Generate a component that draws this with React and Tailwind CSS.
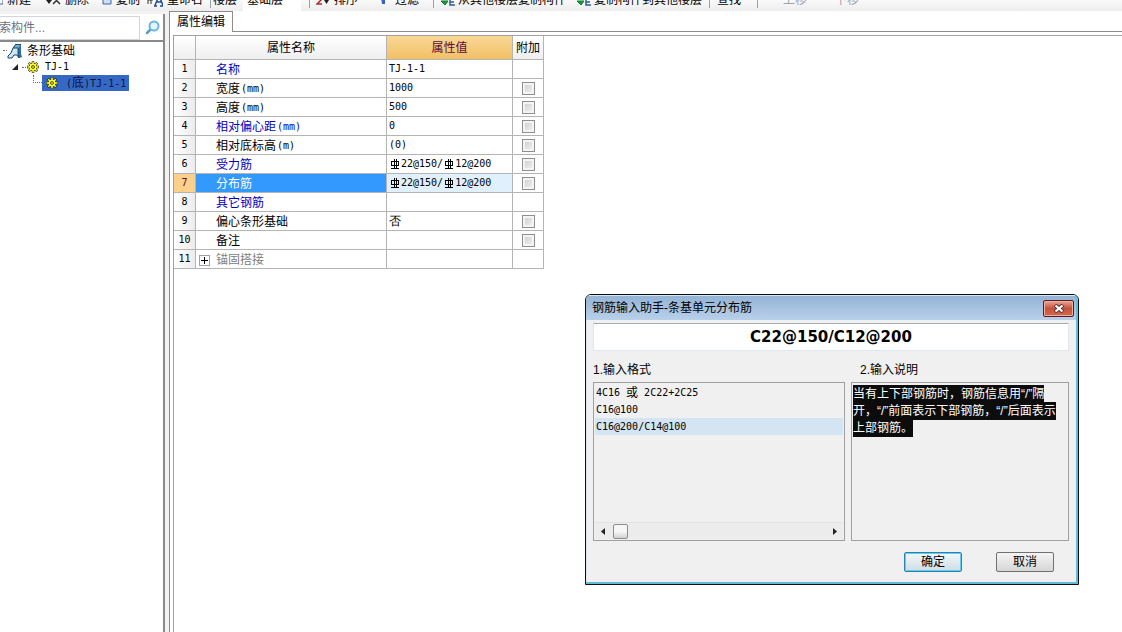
import { useState } from "react";

const TREE_LABEL = "font-['DejaVu_Sans_Mono','Noto_Sans_CJK_SC',monospace] text-[10px]";

const ROWS = [
  { label: "名称", value: "TJ-1-1", tone: "blue" },
  { label: "宽度", unit: "(mm)", value: "1000", check: true },
  { label: "高度", unit: "(mm)", value: "500", check: true },
  { label: "相对偏心距", unit: "(mm)", value: "0", tone: "blue", check: true },
  { label: "相对底标高", unit: "(m)", value: "(0)", check: true },
  { label: "受力筋", rebar: ["22@150/", "12@200"], tone: "blue", check: true },
  { label: "分布筋", rebar: ["22@150/", "12@200"], tone: "blue", check: true },
  { label: "其它钢筋", tone: "blue" },
  { label: "偏心条形基础", cjk: "否", check: true },
  { label: "备注", check: true },
  { label: "锚固搭接", tone: "gray", expandable: true },
];

const FORMATS = [
  { before: "4C16", word: "或", after: "2C22+2C25" },
  { before: "C16@100" },
  { before: "C16@200/C14@100" },
];

function Gear() {
  return (
    <svg className="w-3 h-3 shrink-0" viewBox="0 0 12 12" aria-hidden="true">
      <g stroke="#1c1c00" strokeWidth="2.4">
        <path d="M6 0v12M0 6h12M1.800 1.800l8.400 8.400M10.200 1.800l-8.400 8.400" />
      </g>
      <circle cx="6" cy="6" r="4" fill="#1c1c00" />
      <g stroke="#ffff2e" strokeWidth="1.5">
        <path d="M6 .5v11M.5 6h11M2.2 2.2l7.6 7.6M9.8 2.2l-7.6 7.6" />
      </g>
      <circle cx="6" cy="6" r="3.5" fill="#ffff2e" />
      <circle cx="6" cy="6" r="1.8" fill="#1c1c00" />
      <circle cx="6" cy="6" r=".9" fill="#ffff2e" />
    </svg>
  );
}

function FoundationIcon() {
  return (
    <svg className="w-4 h-4 shrink-0" viewBox="0 0 16 16" aria-hidden="true">
      <path d="M1 15v-2l3-3 2-5 3-4h5v10l1 3-3 1-2-3H7l-2 3z" fill="#cfe6f3" />
      <path d="M9 1h5l-3 4H6z" fill="#6fb0d6" />
      <path d="M14 1v10l1 3-3 1-1-4V5z" fill="#2d6f9f" />
      <path d="M9 1.500h5M9 1L6 5l-2 5-3 3v2h4l2-3h3l2 3M6 5h5v6l1 4" fill="none" stroke="#1c4668" />
    </svg>
  );
}

// grade III bar symbol
function RebarSymbol() {
  return (
    <svg className="w-3 h-3 shrink-0" viewBox="0 0 12 12" role="img" aria-label="三级钢">
      <path d="M2.500 3.500h7v4h-7zM5 1v9M7 1v9M2 10.500h8" fill="none" stroke="#000" shapeRendering="crispEdges" />
    </svg>
  );
}

function ToolButton({ children, disabled }) {
  return (
    <button disabled={disabled} className="shrink-0 whitespace-nowrap leading-4 disabled:text-gray-400">
      {children}
    </button>
  );
}

function CopyFloorIcon() {
  return (
    <svg className="w-[14px] h-4" viewBox="0 0 14 16" aria-hidden="true">
      <path d="M0 9h7l-3 4z" fill="#1c9a3a" stroke="#0f7a2a" />
      <path d="M13 7H9v6h5M9 10h4" fill="none" stroke="#2f5c96" strokeWidth="1.500" />
    </svg>
  );
}

function Toolbar() {
  return (
    <header className="h-[11px] shrink-0 overflow-hidden bg-linear-to-b from-[#fafafa] to-[#ededed] flex items-end">
      <div className="flex items-end pb-[3px] h-5 shrink-0">
        <div className="w-[45px] flex items-end gap-1">
          <svg className="w-[3px] h-4" viewBox="0 0 3 16" aria-hidden="true">
            <path d="M0 12h3V6" fill="none" stroke="#4a66a8" />
          </svg>
          <ToolButton>新建</ToolButton>
        </div>
        <div className="w-[57px] flex items-end gap-1">
          <svg className="w-4 h-4" viewBox="0 0 16 16" aria-hidden="true">
            <path d="M1 8l3 4 3-4z" fill="#222" />
            <path d="M8 5l7 7M15 5l-7 7" stroke="#333" strokeWidth="1.5" />
          </svg>
          <ToolButton>删除</ToolButton>
        </div>
        <div className="w-[45px] flex items-end gap-1">
          <svg className="w-[10px] h-4" viewBox="0 0 10 16" aria-hidden="true">
            <path d="M1 4h8v8H1z" fill="#cfe0f5" stroke="#3864b0" />
          </svg>
          <ToolButton>复制</ToolButton>
        </div>
        <div className="w-[63px] flex items-end gap-1">
          <svg className="w-4 h-4" viewBox="0 0 16 16" aria-hidden="true">
            <path d="M1 4v8M4 4v8M1 8h5" stroke="#333" />
            <path d="M8 13.500l4-10 4 10M9 10h5M7 14h3M13 14h3" fill="none" stroke="#234a9c" strokeWidth="1.500" />
          </svg>
          <ToolButton>重命名</ToolButton>
        </div>
      </div>
      <div className="flex items-end pb-[3px] h-5 shrink-0">
        <span className="w-px h-4 bg-gray-400" />
        <label htmlFor="floor" className="w-[32px] pl-[2px] leading-4">楼层</label>
        <select id="floor" defaultValue="base" className="appearance-none w-[58px] h-5 pb-1 bg-white pl-1 leading-4 -mb-1">
          <option value="base">基础层</option>
        </select>
      </div>
      <div className="flex items-end pb-[3px] h-5 shrink-0 pl-[8px]">
        <span className="w-px h-4 bg-gray-400" />
        <div className="w-[71px] flex items-end gap-1 pl-[6px]">
          <svg className="w-[14px] h-4" viewBox="0 0 14 16" aria-hidden="true">
            <path d="M1 7h5l-5 5h5" fill="none" stroke="#b02a2a" strokeWidth="1.500" />
            <path d="M8 8h5l-2.500 4z" fill="#222" />
          </svg>
          <ToolButton>排序</ToolButton>
        </div>
        <div className="w-[52px] flex items-end gap-[10px]">
          <svg className="w-1 h-4" viewBox="0 0 4 16" aria-hidden="true">
            <path d="M0 5h4v7H1z" fill="#3d5fc4" />
          </svg>
          <ToolButton>过滤</ToolButton>
        </div>
        <span className="w-px h-4 bg-gray-400" />
        <div className="w-[143px] pl-[7px] flex items-end gap-[3px]">
          <CopyFloorIcon />
          <ToolButton>从其他楼层复制构件</ToolButton>
        </div>
        <div className="w-[132px] flex items-end gap-[3px]">
          <CopyFloorIcon />
          <ToolButton>复制构件到其他楼层</ToolButton>
        </div>
        <span className="w-px h-4 bg-gray-400" />
        <div className="w-[47px] pl-[7px]"><ToolButton>查找</ToolButton></div>
        <span className="w-px h-4 bg-gray-400" />
        <div className="w-[77px] pl-[25px]"><ToolButton disabled>上移</ToolButton></div>
        <ToolButton disabled>下移</ToolButton>
      </div>
    </header>
  );
}

function ComponentTree() {
  return (
    <aside className="w-[165px] shrink-0 mt-[3px] border-r-2 border-[#8a8a8a] bg-white overflow-hidden flex flex-col">
      <div className="flex items-center h-[28px] border-b-2 border-[#8a8a8a] pt-px">
        <input
          type="text"
          aria-label="搜索构件"
          placeholder="搜索构件..."
          className="-ml-4 w-[156px] h-[24px] pl-0.5 border border-gray-300 bg-white placeholder:text-gray-500 outline-none"
        />
        <button aria-label="搜索" className="ml-[5px]">
          <svg className="w-[15px] h-[15px]" viewBox="0 0 15 15" fill="none">
            <path d="M5.500 9.500L2 13" stroke="#5b9bd0" strokeWidth="2.500" strokeLinecap="round" />
            <circle cx="9" cy="6" r="4.500" fill="#e4f5fd" stroke="#6cb6e4" strokeWidth="2" />
          </svg>
        </button>
      </div>
      <ul role="tree" className="leading-4">
        <li role="treeitem" aria-expanded="true">
          <div className="flex items-center h-[17px] pl-[3px]">
            <span className="w-1 border-t border-dotted border-gray-500" />
            <FoundationIcon />
            <span className="ml-1">条形基础</span>
          </div>
          <ul role="group">
            <li role="treeitem" aria-expanded="true">
              <div className="flex items-center h-4 pl-3">
                <svg className="w-1.5 h-1.5" viewBox="0 0 6 6" aria-hidden="true">
                  <path d="M6 0v6H0z" fill="#222" />
                </svg>
                <span className="ml-1 w-1 mr-px border-t border-dotted border-gray-500" />
                <Gear />
                <span className={`ml-1.5 ${TREE_LABEL}`}>TJ-1</span>
              </div>
              <ul role="group">
                <li role="treeitem" aria-selected="true" className="flex h-4 pl-[33px]">
                  <span className="w-[9px] h-2 border-l border-b border-dotted border-gray-500" />
                  <div className="flex items-center w-[87px] pl-1 bg-[#3568c4] text-[#0b123c]">
                    <Gear />
                    <span className={`ml-2 ${TREE_LABEL}`}>
                      (<span className="text-xs leading-4">底</span>)TJ-1-1
                    </span>
                  </div>
                </li>
              </ul>
            </li>
          </ul>
        </li>
      </ul>
    </aside>
  );
}

function PropertyRow({ row, index, selected, onSelect }) {
  const tone =
    row.tone === "blue" ? "text-[#0000c0]" : row.tone === "gray" ? "text-[#808080]" : "text-black";
  const mono = "font-['DejaVu_Sans_Mono',monospace] text-[10px]";

  return (
    <tr className="h-[19px]" onClick={onSelect}>
      <th
        scope="row"
        className={`border-r border-b border-[#b4b4b4] font-normal ${mono} ${
          selected ? "bg-[#fbd08a] text-[#5c1030]" : "bg-linear-to-r from-white to-[#ececec]"
        }`}
      >
        {index + 1}
      </th>
      <td className={`border-r border-b border-[#b4b4b4] ${selected ? "bg-[#3399ff] text-white" : tone}`}>
        <div className="flex items-center h-[18px] pt-0.5">
          <span className="w-5 flex pl-[3px]">
            {row.expandable && (
              <button aria-label="展开" className="w-[11px] h-[11px] border border-gray-400 bg-white text-black">
                <svg className="w-[9px] h-[9px]" viewBox="0 0 9 9" aria-hidden="true">
                  <path d="M1 4.500h7M4.500 1v7" stroke="currentColor" />
                </svg>
              </button>
            )}
          </span>
          {row.label}
          {row.unit && <span className={`ml-px ${mono}`}>{row.unit}</span>}
        </div>
      </td>
      <td className={`border-r border-b border-[#b4b4b4] ${selected ? "bg-[#e1f0fd]" : ""}`}>
        <div className={`flex items-center h-[18px] pl-0.5 ${mono}`}>
          {row.value}
          {row.cjk && <span className="text-xs">{row.cjk}</span>}
          {row.rebar &&
            row.rebar.map((part) => (
              <span key={part} className="flex items-center">
                <RebarSymbol />
                {part}
              </span>
            ))}
        </div>
      </td>
      <td className="border-r border-b border-[#b4b4b4]">
        {row.check && (
          <input
            type="checkbox"
            aria-label={`附加 ${row.label}`}
            className="appearance-none block mx-auto w-[13px] h-[13px] border border-[#8e8f8f] bg-linear-to-br from-[#c8cacc] to-[#f6f6f6] shadow-[inset_0_0_0_2px_#f4f4f4] checked:bg-[#3399ff]"
          />
        )}
      </td>
    </tr>
  );
}

function PropertyTable() {
  const [selected, setSelected] = useState(6);
  const head = "border-r border-b border-[#b4b4b4] font-normal";

  return (
    <table className="table-fixed w-[370px] border-separate border-spacing-0">
      <colgroup>
        <col className="w-[22px]" />
        <col className="w-[191px]" />
        <col className="w-[126px]" />
        <col className="w-[31px]" />
      </colgroup>
      <thead>
        <tr className="h-[24px] bg-linear-to-b from-white to-[#eeeeee]">
          <th className={head} aria-label="序号" />
          <th className={head}>属性名称</th>
          <th className={`${head} bg-linear-to-b from-[#f9d796] to-[#f2c062] text-[#5c0a3c]`}>属性值</th>
          <th className={head}>附加</th>
        </tr>
      </thead>
      <tbody>
        {ROWS.map((row, i) => (
          <PropertyRow
            key={row.label}
            row={row}
            index={i}
            selected={i === selected}
            onSelect={() => setSelected(i)}
          />
        ))}
      </tbody>
    </table>
  );
}

function RebarDialog() {
  const [format, setFormat] = useState(2);

  return (
    <section
      role="dialog"
      aria-label="钢筋输入助手"
      className="absolute left-[585px] top-[294px] w-[494px] rounded-t-md border border-[#0c1016] bg-[#f0f0f0] overflow-hidden"
    >
      <div className="border-r-2 border-b-2 border-[#62bcd6] rounded-t-md">
        {/* Title bar */}
        <div className="flex items-center justify-between h-[25px] pl-1.5 pr-0.5 border-t border-[#d5e6f5] bg-linear-to-b from-[#95b3d5] to-[#b9d0ea]">
          <h2>钢筋输入助手-条基单元分布筋</h2>
          <button
            aria-label="关闭"
            className="flex items-center justify-center w-[31px] h-[17px] rounded-xs border border-[#5c1c1c] bg-linear-to-b from-[#e5a596] via-[#c8503a] to-[#d06a50] shadow-[inset_0_0_0_1px_#ecb0a0]"
          >
            <svg className="w-[12px] h-[9px]" viewBox="0 0 12 9" aria-hidden="true">
              <path d="M2 1l8 7M10 1L2 8" stroke="#5a3535" strokeWidth="4" />
              <path d="M2.500 1.500l7 6M9.500 1.500l-7 6" stroke="#fff" strokeWidth="2.200" />
            </svg>
          </button>
        </div>

        <div className="pl-1.5 pr-[7px] pt-[3px] pb-2.5 border-l border-[#dfe6ee]">
          <input
            type="text"
            aria-label="钢筋信息"
            defaultValue="C22@150/C12@200"
            className="block w-full h-[28px] bg-white border border-[#dfe7ef] border-t-[#a5abb3] text-center font-['DejaVu_Sans',sans-serif] font-bold text-[15px] text-black outline-none"
          />

          <div className="flex gap-1.5 pt-[11px]">
            {/* Input formats */}
            <div className="flex-1">
              <h3 id="format-label" className="h-5 leading-4">1.输入格式</h3>
              <div className="flex flex-col h-[159px] border border-[#a0a0a0] p-px">
                <ul
                  role="listbox"
                  aria-labelledby="format-label"
                  className="flex-1 font-['DejaVu_Sans_Mono','Noto_Sans_CJK_SC',monospace] text-[10px]"
                >
                  {FORMATS.map((item, i) => (
                    <li
                      key={item.before}
                      role="option"
                      aria-selected={i === format}
                      onClick={() => setFormat(i)}
                      className={`flex items-center gap-1.5 h-[17px] pl-px ${i === format ? "bg-[#d4e4f2]" : ""}`}
                    >
                      <span>{item.before}</span>
                      {item.word && <span className="text-xs">{item.word}</span>}
                      {item.after && <span>{item.after}</span>}
                    </li>
                  ))}
                </ul>
                <div className="flex items-center h-[17px] px-[5px] border-t border-[#e2e2e2] bg-[#ececec]">
                  <button aria-label="向左滚动">
                    <svg className="w-1.5 h-[7px]" viewBox="0 0 6 7" aria-hidden="true">
                      <path d="M5 0v7L1 3.500z" fill="#222" />
                    </svg>
                  </button>
                  <span className="ml-[7px] w-[15px] h-[15px] rounded-xs border border-[#8c8c8c] bg-linear-to-b from-[#f6f6f6] from-50% to-[#d2d2d2]" />
                  <button aria-label="向右滚动" className="ml-auto">
                    <svg className="w-1.5 h-[7px]" viewBox="0 0 6 7" aria-hidden="true">
                      <path d="M1 0v7l4-3.500z" fill="#222" />
                    </svg>
                  </button>
                </div>
              </div>
            </div>

            {/* Help text */}
            <div className="w-[218px]">
              <h3 className="h-5 leading-4 pl-[9px]">2.输入说明</h3>
              <div className="h-[159px] border border-[#a0a0a0] pt-[3px] pl-px pr-[9px]">
                <p className="leading-[17px]">
                  <span className="py-0.5 bg-[#0c0c0c] text-white">
                    当有上下部钢筋时，钢筋信息用“/”隔开，“/”前面表示下部钢筋，“/”后面表示上部钢筋。
                  </span>
                </p>
              </div>
            </div>
          </div>

          <div className="flex justify-end gap-[34px] pt-[11px] pr-[15px]">
            <button className="w-[58px] h-[20px] leading-4 rounded-xs border border-[#2f7fae] bg-linear-to-b from-[#f2f8fb] to-[#cfdde4] shadow-[inset_0_0_0_1px_#5fd0f2]">
              确定
            </button>
            <button className="w-[58px] h-[20px] leading-4 rounded-xs border border-[#707070] bg-linear-to-b from-[#f4f4f4] to-[#d6d6d6]">
              取消
            </button>
          </div>
        </div>
      </div>
    </section>
  );
}

function App() {
  return (
    <div className="relative h-screen overflow-hidden flex flex-col bg-[#f2f2f2] text-black text-xs font-['Liberation_Sans','Noto_Sans_CJK_SC',sans-serif]">
      <Toolbar />

      <div className="flex-1 min-h-0 flex">
        <ComponentTree />

        <main className="flex-1 min-w-0 ml-[4px] flex flex-col">
          <div role="tablist" className="flex h-[21px] bg-white">
            <button
              role="tab"
              aria-selected="true"
              className="w-[64px] border border-b-0 border-[#8c8c8c] bg-white leading-4"
            >
              属性编辑
            </button>
            <div className="flex-1 border-b border-[#8c8c8c]" />
          </div>
          <div className="flex-1 min-h-0 pl-[3px] pt-[3px] border-l border-[#8c8c8c] bg-white">
            <div className="h-full border-l border-t border-[#a0a0a0]">
              <PropertyTable />
            </div>
          </div>
        </main>
      </div>

      <RebarDialog />
    </div>
  );
}

export default App;
